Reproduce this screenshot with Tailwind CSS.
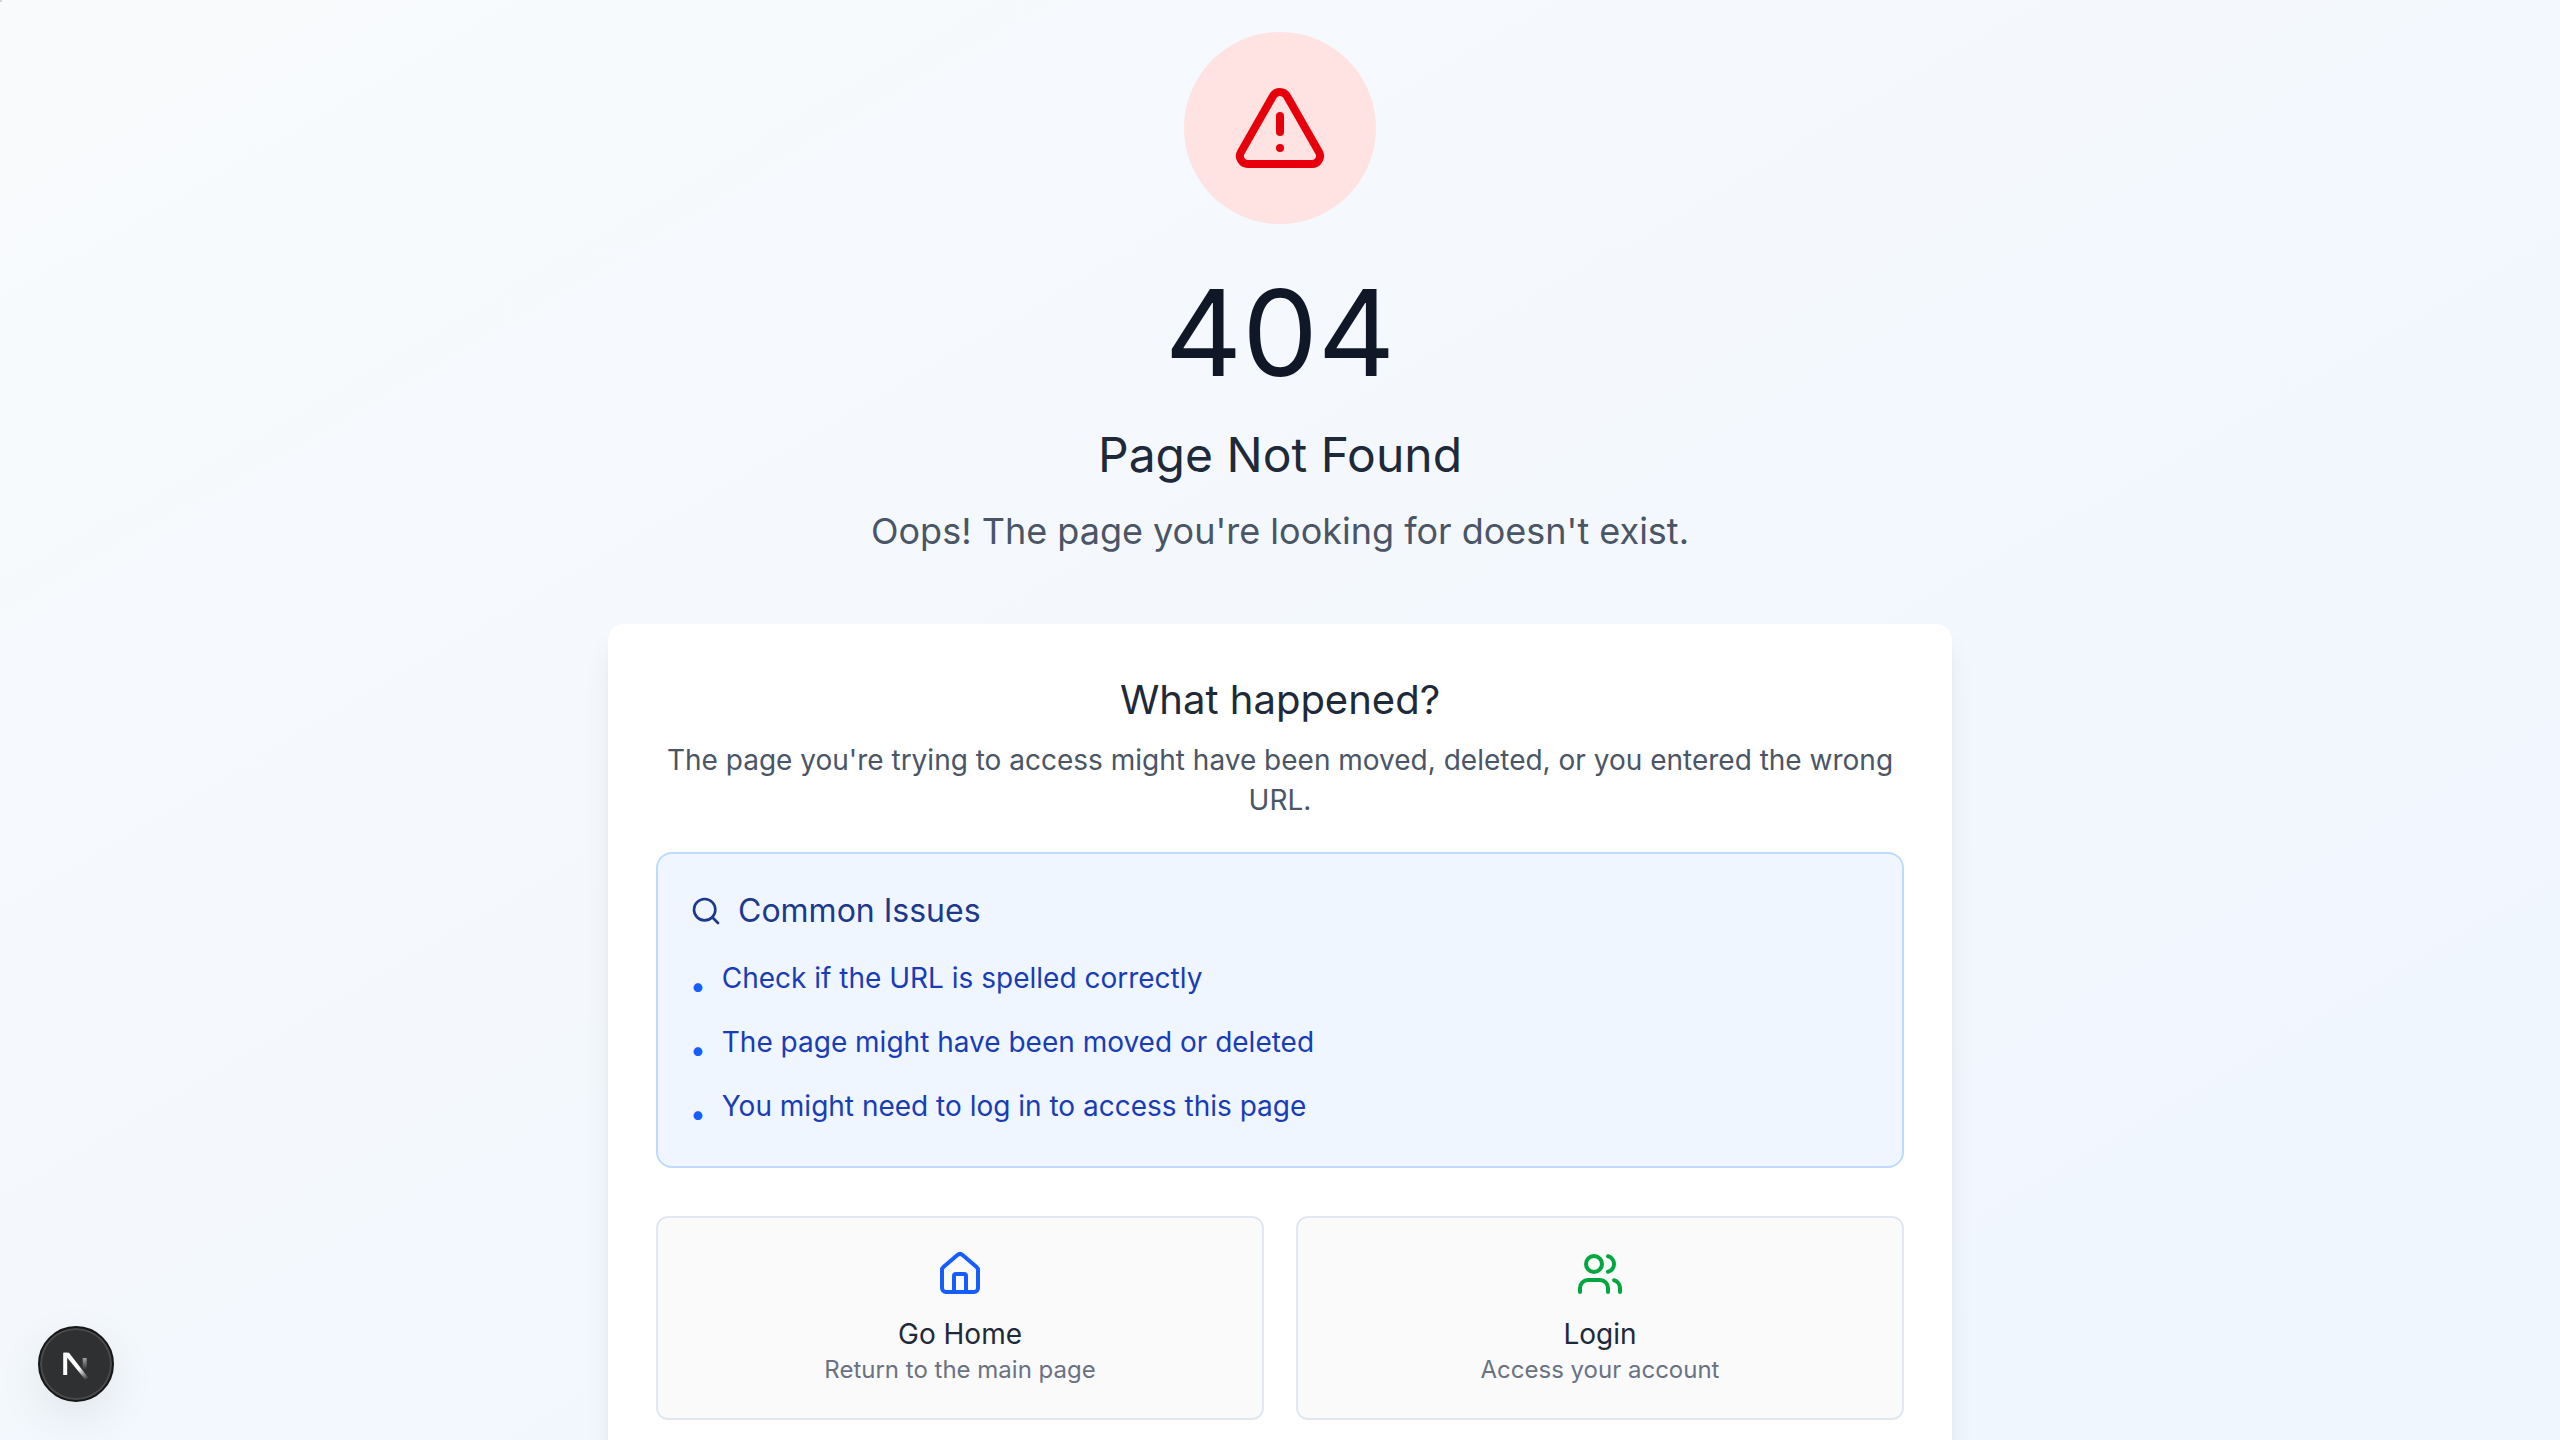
<!DOCTYPE html>
<html lang="en">
<head>
<meta charset="utf-8">
<title>404 - Page Not Found</title>
<script src="https://cdn.jsdelivr.net/npm/@tailwindcss/browser@4"></script>
</head>
<body class="font-['Inter',sans-serif] antialiased">
<span class="absolute left-0 top-0 size-0.5 bg-neutral-300" aria-hidden="true"></span>
<main class="flex min-h-screen flex-col items-center bg-linear-to-br from-slate-50 to-blue-50 p-8">
  <div class="w-full max-w-[1344px] text-center">
    <div class="mx-auto flex size-48 items-center justify-center rounded-full bg-red-100">
      <svg class="size-24 text-red-600" viewBox="0 0 24 24" fill="none" stroke="currentColor" stroke-width="2" stroke-linecap="round" stroke-linejoin="round" aria-hidden="true"><path d="m21.73 18-8-14a2 2 0 0 0-3.48 0l-8 14A2 2 0 0 0 4 21h16a2 2 0 0 0 1.73-3"/><path d="M12 9v4"/><path d="M12 17h.01"/></svg>
    </div>
    <h1 class="mt-12 text-[120px] leading-[122px] text-gray-900">404</h1>
    <h2 class="mt-[30px] text-5xl leading-[62px] text-gray-800">Page Not Found</h2>
    <p class="mt-4 text-4xl leading-[58px] text-gray-600">Oops! The page you're looking for doesn't exist.</p>

    <section class="mt-16 rounded-2xl bg-white p-12 shadow-[0_20px_30px_-6px_rgb(0_0_0/0.1),0_8px_12px_-8px_rgb(0_0_0/0.1)]">
      <h3 class="text-[40px] leading-[56px] text-gray-800">What happened?</h3>
      <p class="mt-3 text-[28px] leading-10 text-gray-600">The page you're trying to access might have been moved, deleted, or you entered the wrong URL.</p>

      <div class="mt-8 rounded-2xl border-2 border-blue-200 bg-blue-50 p-8 text-left">
        <h4 class="flex items-center gap-4 text-[32px] leading-[50px] text-blue-900">
          <svg class="size-8" viewBox="0 0 24 24" fill="none" stroke="currentColor" stroke-width="2" stroke-linecap="round" stroke-linejoin="round" aria-hidden="true"><circle cx="11" cy="11" r="8"/><path d="m21 21-4.3-4.3"/></svg>
          Common Issues
        </h4>
        <ul class="mt-[22px] flex flex-col gap-4 text-[28px] leading-10 text-blue-800">
          <li class="flex items-start gap-4"><span class="mt-2 text-blue-600">•</span><span>Check if the URL is spelled correctly</span></li>
          <li class="flex items-start gap-4"><span class="mt-2 text-blue-600">•</span><span>The page might have been moved or deleted</span></li>
          <li class="flex items-start gap-4"><span class="mt-2 text-blue-600">•</span><span>You might need to log in to access this page</span></li>
        </ul>
      </div>

      <div class="mt-12 grid grid-cols-2 gap-8">
        <a href="#home" class="flex flex-col items-center rounded-xl border-2 border-slate-200 bg-neutral-50 p-8">
          <svg class="mb-4 size-12 text-blue-600" viewBox="0 0 24 24" fill="none" stroke="currentColor" stroke-width="2" stroke-linecap="round" stroke-linejoin="round" aria-hidden="true"><path d="M15 21v-8a1 1 0 0 0-1-1h-4a1 1 0 0 0-1 1v8"/><path d="M3 10a2 2 0 0 1 .709-1.528l7-5.999a2 2 0 0 1 2.582 0l7 5.999A2 2 0 0 1 21 10v9a2 2 0 0 1-2 2H5a2 2 0 0 1-2-2z"/></svg>
          <span class="text-[28px] leading-10 text-gray-800">Go Home</span>
          <span class="text-2xl text-gray-500">Return to the main page</span>
        </a>
        <a href="#login" class="flex flex-col items-center rounded-xl border-2 border-slate-200 bg-neutral-50 p-8">
          <svg class="mb-4 size-12 text-green-600" viewBox="0 0 24 24" fill="none" stroke="currentColor" stroke-width="2" stroke-linecap="round" stroke-linejoin="round" aria-hidden="true"><path d="M16 21v-2a4 4 0 0 0-4-4H6a4 4 0 0 0-4 4v2"/><circle cx="9" cy="7" r="4"/><path d="M22 21v-2a4 4 0 0 0-3-3.87"/><path d="M16 3.13a4 4 0 0 1 0 7.75"/></svg>
          <span class="text-[28px] leading-10 text-gray-800">Login</span>
          <span class="text-2xl text-gray-500">Access your account</span>
        </a>
      </div>
    </section>
  </div>
</main>

<button type="button" aria-label="Open developer tools" class="fixed bottom-[38px] left-[38px] flex size-19 items-center justify-center rounded-full border-2 border-neutral-900 bg-[#2f3032] shadow-[inset_0_0_0_2px_#4a4a4a,0_16px_48px_rgb(0_0_0/0.08)]">
  <svg class="size-10" viewBox="0 0 40 40" fill="none" aria-hidden="true">
    <defs>
      <linearGradient id="stem" x1="0" y1="12" x2="0" y2="26" gradientUnits="userSpaceOnUse"><stop stop-color="#fff" stop-opacity=".65"/><stop offset="1" stop-color="#fff" stop-opacity="0"/></linearGradient>
      <linearGradient id="slash" x1="24" y1="24" x2="32" y2="35" gradientUnits="userSpaceOnUse"><stop stop-color="#fff"/><stop offset="1" stop-color="#fff" stop-opacity="0"/></linearGradient>
    </defs>
    <path d="M9.2 31V8.7" stroke="#fff" stroke-width="4"/>
    <path d="M8 8.7h5l19.5 25.3-3 2L9 11z" fill="url(#slash)"/>
    <path d="M28.7 14v12" stroke="url(#stem)" stroke-width="4"/>
  </svg>
</button>
</body>
</html>
